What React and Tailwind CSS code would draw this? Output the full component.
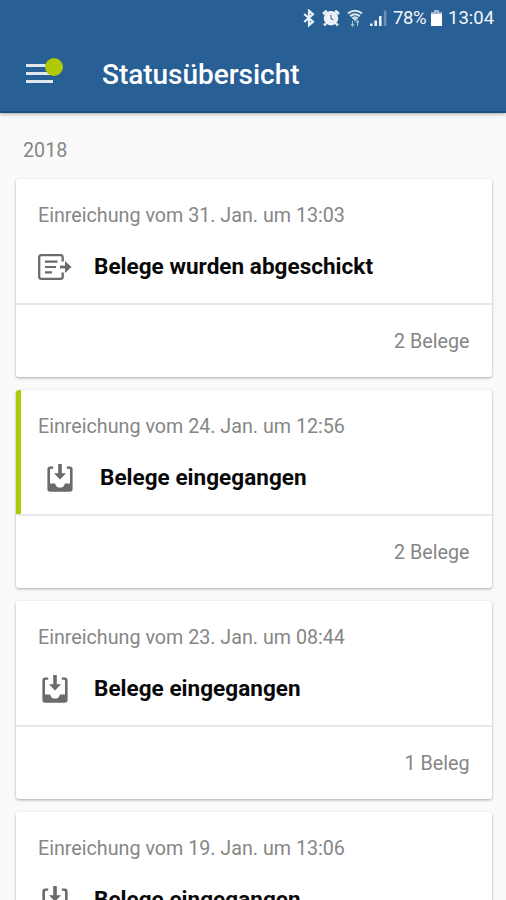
import React from 'react';

const submissions = [
  { id: 1, date: '31. Jan. um 13:03', status: 'sent', count: '2 Belege', unread: false },
  { id: 2, date: '24. Jan. um 12:56', status: 'received', count: '2 Belege', unread: true },
  { id: 3, date: '23. Jan. um 08:44', status: 'received', count: '1 Beleg', unread: false },
  { id: 4, date: '19. Jan. um 13:06', status: 'received', count: null, unread: false },
];

const statusLabels = {
  sent: 'Belege wurden abgeschickt',
  received: 'Belege eingegangen',
};

const SentIcon = () => (
  <svg className="block h-[28px] w-[34px]" viewBox="0 -1 34 28" fill="none" stroke="#6b6b6b">
    <path d="M24.7 7.5V3.2Q24.7 1.2 22.7 1.2H3.2Q1.2 1.2 1.2 3.2V22.8Q1.2 24.8 3.2 24.8H22.7Q24.7 24.8 24.7 22.8V18.5" strokeWidth="2.3" />
    <path d="M7 7.6H19.5M7 13H18M7 18.4H14" strokeWidth="2.2" />
    <path d="M22 13H29" strokeWidth="2.8" />
    <path d="M27 7L33.5 13L27 19Z" fill="#6b6b6b" stroke="none" />
  </svg>
);

const ReceivedIcon = () => (
  <svg className="block h-[28px] w-[26px]" viewBox="0 0 26 28" fill="#6b6b6b">
    <path d="M6.2 2.4H3.2Q0.4 2.4 0.4 5.2V25Q0.4 27.8 3.2 27.8H22.8Q25.6 27.8 25.6 25V5.2Q25.6 2.4 22.8 2.4H19.8V4.8H21.8Q23 4.8 23 6V19.4H17.9Q16.9 23.6 13 23.6Q9.1 23.6 8.1 19.4H3V6Q3 4.8 4.2 4.8H6.2Z" />
    <path d="M11.2 0H14.8V9.2H19L13 15.5L7 9.2H11.2Z" />
  </svg>
);

const BluetoothIcon = () => (
  <svg className="h-[18px] w-[12px]" viewBox="0 0 12 18" fill="none" stroke="#e8f0f7" strokeWidth="2.2">
    <path d="M1.2 5L10 12.7L6 16.2V1.8L10 5.3L1.2 13" />
  </svg>
);

const AlarmIcon = () => (
  <svg className="h-[18px] w-[18px]" viewBox="0 0 18 18">
    <circle cx="9" cy="9.2" r="7.2" fill="#f2f6fa" />
    <path d="M1 5L4.8 1.6M17 5L13.2 1.6M3.8 14.5L2.2 16.4M14.2 14.5L15.8 16.4" stroke="#f2f6fa" strokeWidth="2.6" />
    <circle cx="9" cy="9.2" r="4.9" fill="none" stroke="#d3dfea" strokeWidth="0.7" />
    <path d="M9 5.8V9.6L11.5 11" fill="none" stroke="#4b7aa7" strokeWidth="1.3" />
  </svg>
);

const WifiIcon = () => (
  <svg className="h-[18px] w-[16px]" viewBox="0 0 16 18" fill="none" stroke="#dce7f0" strokeWidth="2">
    <path d="M1 4.4Q8 -0.8 15 4.4M3.2 7.1Q8 3.3 12.8 7.1M5.3 9.6Q8 7.1 10.7 9.6" />
    <path d="M6 9.8H10L8 12.3Z" fill="#dce7f0" stroke="none" />
    <path d="M5.5 12V16.5M4 15L5.5 17L7 15M10.5 17V12M9 13.5L10.5 11.5L12 13.5" stroke="#a8c1d7" strokeWidth="1.1" />
  </svg>
);

const SignalIcon = () => (
  <svg className="h-[18px] w-[17px]" viewBox="0 0 17 18">
    <path d="M0 14.5H2.6V17H0ZM4.4 11.5H7V17H4.4ZM9 7H11.6V17H9Z" fill="#e8f0f7" />
    <path d="M13.8 1.5H16.4V17H13.8Z" fill="#6b91b5" />
  </svg>
);

const BatteryIcon = () => (
  <svg className="h-[18px] w-[11px]" viewBox="0 0 11 18">
    <path d="M3 1H8V3H11V6H0V3H3Z" fill="#9db8d0" />
    <path d="M0 5H11V17H0Z" fill="#fff" />
  </svg>
);

const StatusBar = () => (
  <div className="flex h-9 items-center text-[18.5px] leading-9 text-[#f2f6fa]">
    <div className="ml-[303px] flex w-[84px] shrink-0 items-center justify-between">
      <BluetoothIcon />
      <AlarmIcon />
      <WifiIcon />
      <SignalIcon />
    </div>
    <span className="ml-[6px] w-[34px] tracking-[-0.4px]">78%</span>
    <span className="ml-[4px] flex"><BatteryIcon /></span>
    <span className="ml-[6px]">13:04</span>
  </div>
);

const Header = () => (
  <header className="relative h-[113px] overflow-hidden border-b-2 border-[#1b4f82] bg-[#285f94] shadow-[0_1px_4px_rgba(0,0,0,0.35)]">
    <StatusBar />
    <div className="flex h-[77px] items-center">
      <button className="relative ml-[26px] mt-[-2px] flex w-[27px] flex-col gap-[5px]">
        <span className="h-[3px] bg-[#dfe8f1]" />
        <span className="h-[3px] bg-[#dfe8f1]" />
        <span className="h-[3px] bg-[#dfe8f1]" />
        <span className="absolute -top-[6px] left-[19px] h-[18px] w-[18px] rounded-full bg-[#afca05]" />
      </button>
      <h1 className="ml-[49px] text-[28px] font-medium leading-9 tracking-[-0.03px] text-white">Statusübersicht</h1>
    </div>
  </header>
);

const SubmissionCard = ({ date, status, count, unread }) => (
  <article className="h-[198px] shrink-0 rounded-[3px] bg-white shadow-[0_1px_3px_rgba(0,0,0,0.32)]">
    <div className={`h-[124px] pt-[23px] ${unread ? 'rounded-tl-[3px] border-l-[5px] border-[#afca05] pl-[17px]' : 'pl-[22px]'}`}>
      <p className="text-[19.7px] leading-[28px] text-[#868686]">Einreichung vom {date}</p>
      <div className={`mt-[23px] flex h-[28px] items-center ${unread ? 'pl-[5px]' : ''}`}>
        <div className={`flex shrink-0 ${unread ? 'w-[57px]' : 'w-[56px]'} ${status === 'received' ? 'pl-[4px]' : ''}`}>
          {status === 'sent' ? <SentIcon /> : <ReceivedIcon />}
        </div>
        <h2 className="text-[22.5px] font-bold leading-[26px] tracking-[0.03px] text-[#080808] pb-[2px]">{statusLabels[status]}</h2>
      </div>
    </div>
    <div className="flex h-[74px] items-center justify-end border-t-2 border-[#e8e8e8] pr-[22.5px] pt-[2px]">
      {count && <span className="text-[19.7px] leading-[28px] text-[#868686]">{count}</span>}
    </div>
  </article>
);

const App = () => {
  return (
    <div className="h-[900px] w-[506px] overflow-hidden bg-[#fafafa] font-['Roboto',sans-serif]">
      <Header />
      <main>
        <h3 className="h-[66px] pl-[23px] pt-[24px] text-[19.7px] leading-[28px] text-[#868686]">2018</h3>
        <div className="flex flex-col gap-[13px] pl-4 pr-[14px]">
          {submissions.map((item) => (
            <SubmissionCard key={item.id} {...item} />
          ))}
        </div>
      </main>
    </div>
  );
};

export default App;
